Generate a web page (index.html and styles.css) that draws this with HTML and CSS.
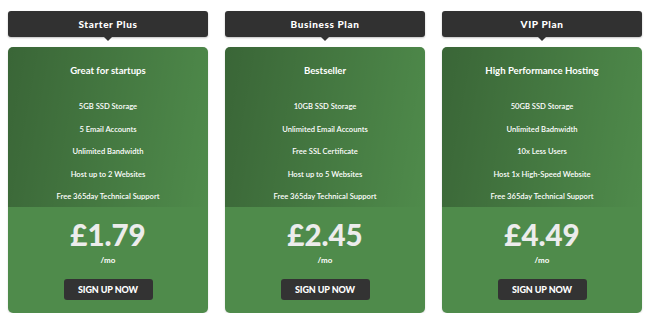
FILE: index.html
```html
<!DOCTYPE html>
<html>
<head>
<meta charset="utf-8">
<link rel="stylesheet" href="styles.css">
</head>
<body>
<div class="plans">
  <div class="plan">
    <div class="plan-name">Starter Plus</div>
    <div class="card">
      <div class="card-top">
        <div class="tagline">Great for startups</div>
        <ul class="features">
          <li>5GB SSD Storage</li>
          <li>5 Email Accounts</li>
          <li>Unlimited Bandwidth</li>
          <li>Host up to 2 Websites</li>
          <li>Free 365day Technical Support</li>
        </ul>
      </div>
      <div class="card-bottom">
        <div class="price">£1.79</div>
        <div class="period">/mo</div>
        <a class="btn">SIGN UP NOW</a>
      </div>
    </div>
  </div>
  <div class="plan">
    <div class="plan-name">Business Plan</div>
    <div class="card">
      <div class="card-top">
        <div class="tagline">Bestseller</div>
        <ul class="features">
          <li>10GB SSD Storage</li>
          <li>Unlimited Email Accounts</li>
          <li>Free SSL Certificate</li>
          <li>Host up to 5 Websites</li>
          <li>Free 365day Technical Support</li>
        </ul>
      </div>
      <div class="card-bottom">
        <div class="price">£2.45</div>
        <div class="period">/mo</div>
        <a class="btn">SIGN UP NOW</a>
      </div>
    </div>
  </div>
  <div class="plan">
    <div class="plan-name">VIP Plan</div>
    <div class="card">
      <div class="card-top">
        <div class="tagline">High Performance Hosting</div>
        <ul class="features">
          <li>50GB SSD Storage</li>
          <li>Unlimited Badnwidth</li>
          <li>10x Less Users</li>
          <li>Host 1x High-Speed Website</li>
          <li>Free 365day Technical Support</li>
        </ul>
      </div>
      <div class="card-bottom">
        <div class="price">£4.49</div>
        <div class="period">/mo</div>
        <a class="btn">SIGN UP NOW</a>
      </div>
    </div>
  </div>
</div>
</body>
</html>
```
FILE: styles.css
```css
* { box-sizing: border-box; }
html, body { margin: 0; padding: 0; background: #fff; }
body { font-family: Lato, "Liberation Sans", sans-serif; }

.plans {
  display: flex;
  gap: 17px;
  padding: 11px 8px 0 8px;
}
.plan { width: 200px; display: flex; flex-direction: column; }

.plan-name {
  position: relative;
  height: 26px;
  background: #313131;
  border-radius: 3px;
  color: #fff;
  font-weight: 900;
  font-size: 10px;
  letter-spacing: 0.6px;
  line-height: 26px;
  text-align: center;
  box-shadow: 0 1px 2px rgba(0,0,0,0.25);
}
.plan-name::after {
  content: "";
  position: absolute;
  left: 50%;
  top: 100%;
  margin-left: -4px;
  border-left: 4px solid transparent;
  border-right: 4px solid transparent;
  border-top: 4px solid #313131;
}

.card {
  margin-top: 10px;
  height: 266px;
  border-radius: 5px;
  overflow: hidden;
  background: #4f8b4b;
  color: #fff;
  text-align: center;
  box-shadow: 0 1px 2px rgba(0,0,0,0.15);
}
.card-top {
  height: 160px;
  padding-top: 17px;
  background: linear-gradient(100deg, rgba(0,0,0,0.27) 0%, rgba(0,0,0,0) 100%);
}
.tagline {
  font-weight: 700;
  font-size: 9.6px;
  line-height: 14px;
}
.features {
  list-style: none;
  margin: 17px 0 0 0;
  padding: 0;
  font-size: 7.6px;
  font-weight: 600;
}
.features li { line-height: 22.5px; }

.card-bottom {
  padding-top: 11px;
  display: flex;
  flex-direction: column;
  align-items: center;
}
.price {
  font-weight: 900;
  font-size: 29.5px;
  line-height: 34px;
  color: #ececec;
}
.period {
  font-weight: 700;
  font-size: 8px;
  line-height: 12px;
  margin-top: 2px;
}
.btn {
  margin-top: 13px;
  width: 89px;
  height: 21px;
  line-height: 21px;
  border-radius: 3px;
  background: #333;
  color: #fff;
  font-weight: 900;
  font-size: 9px;
  letter-spacing: -0.1px;
}
```
